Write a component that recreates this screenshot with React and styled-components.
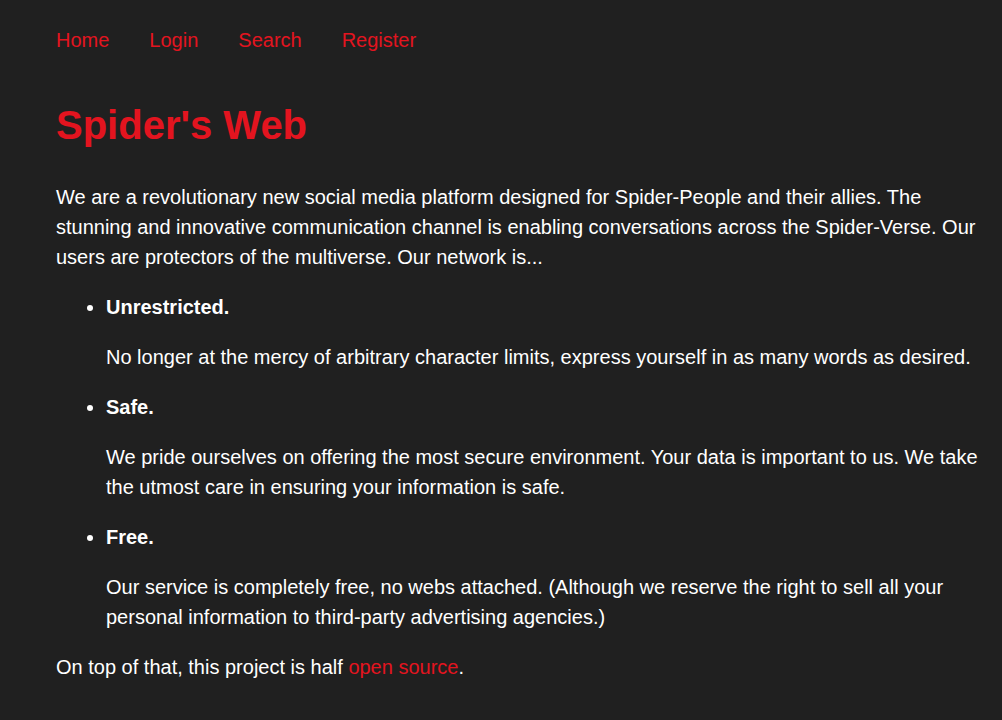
import styled, { createGlobalStyle } from "styled-components";

const GlobalStyle = createGlobalStyle`
  html, body {
    margin: 0;
    background-color: #202020;
  }
  body {
    font-family: "Liberation Sans", Arial, sans-serif;
    color: #ffffff;
  }
`;

const Page = styled.div`
  padding: 25px 20px 20px 56px;
`;

const NavBar = styled.nav`
  display: flex;
  gap: 40px;
  height: 30px;
`;

const NavLink = styled.a`
  color: #e3141f;
  font-size: 20px;
  line-height: 30px;
  text-decoration: none;
`;

const Title = styled.h1`
  color: #e3141f;
  font-size: 40px;
  line-height: 48px;
  font-weight: bold;
  margin: 46px 0 33px;
`;

const Text = styled.p`
  font-size: 20px;
  line-height: 30px;
  margin: 20px 0;
`;

const FeatureList = styled.ul`
  margin: 20px 0;
  padding-left: 50px;
`;

const Feature = styled.li`
  font-size: 20px;
  line-height: 30px;
`;

const FeatureName = styled.p`
  font-weight: bold;
  margin: 20px 0;
`;

const Link = styled.a`
  color: #e3141f;
  text-decoration: none;
`;

const FEATURES = [
  {
    name: "Unrestricted.",
    text: "No longer at the mercy of arbitrary character limits, express yourself in as many words as desired.",
  },
  {
    name: "Safe.",
    text: "We pride ourselves on offering the most secure environment. Your data is important to us. We take the utmost care in ensuring your information is safe.",
  },
  {
    name: "Free.",
    text: "Our service is completely free, no webs attached. (Although we reserve the right to sell all your personal information to third-party advertising agencies.)",
  },
];

function App() {
  return (
    <>
      <GlobalStyle />
      <Page>
        <NavBar>
          <NavLink href="#">Home</NavLink>
          <NavLink href="#">Login</NavLink>
          <NavLink href="#">Search</NavLink>
          <NavLink href="#">Register</NavLink>
        </NavBar>
        <Title>Spider's Web</Title>
        <Text>
          We are a revolutionary new social media platform designed for
          Spider-People and their allies. The stunning and innovative
          communication channel is enabling conversations across the
          Spider-Verse. Our users are protectors of the multiverse. Our network
          is...
        </Text>
        <FeatureList>
          {FEATURES.map((f) => (
            <Feature key={f.name}>
              <FeatureName>{f.name}</FeatureName>
              <Text>{f.text}</Text>
            </Feature>
          ))}
        </FeatureList>
        <Text>
          On top of that, this project is half <Link href="#">open source</Link>.
        </Text>
      </Page>
    </>
  );
}

export default App;
